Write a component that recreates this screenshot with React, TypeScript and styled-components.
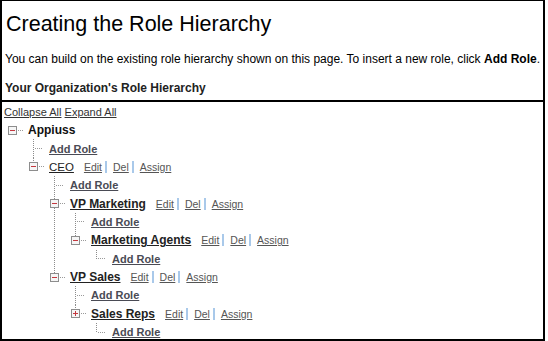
import React from 'react'
import styled, { createGlobalStyle } from 'styled-components'

const GlobalStyle = createGlobalStyle`
  body {
    margin: 0;
    background: #fff;
    font-family: 'Liberation Sans', Arial, sans-serif;
  }
`

const ROW = 18.36
const INDENT = 21

const Frame = styled.div`
  box-sizing: border-box;
  width: 545px;
  height: 341px;
  border-style: solid;
  border-color: #000;
  border-width: 1px 2px 2px 2px;
  overflow: hidden;
  color: #000;
`

const Header = styled.div`
  padding: 10px 0 5px 3px;
  border-bottom: 2px solid #000;
`

const Title = styled.h1`
  margin: 0;
  padding-left: 1px;
  font-size: 21.5px;
  line-height: 26px;
  font-weight: normal;
  white-space: nowrap;
`

const Intro = styled.p`
  margin: 15px 0 0 0;
  font-size: 12px;
  line-height: 14px;
  white-space: nowrap;
`

const SubHeading = styled.h2`
  margin: 15px 0 0 0;
  font-size: 12px;
  line-height: 14px;
  font-weight: bold;
  color: #222;
`

const Body = styled.div`
  padding: 4px 0 0 2px;
`

const ToolLinks = styled.div`
  font-size: 11px;
  line-height: 13px;
  color: #333;
  white-space: nowrap;
`

const ToolLink = styled.a`
  color: #333;
  text-decoration: underline;
  cursor: pointer;
`

const TreeList = styled.ul<{ nested?: boolean }>`
  list-style: none;
  margin: ${(p) => (p.nested ? `0 0 0 ${INDENT}px` : '2px 0 0 4px')};
  padding: 0;
`

const Item = styled.li<{ connected?: boolean }>`
  position: relative;
  ${(p) =>
    p.connected &&
    `
    &::before {
      content: '';
      position: absolute;
      left: 4px;
      top: 0;
      bottom: 0;
      width: 1px;
      background: repeating-linear-gradient(to bottom, #8c8c8c 0 1px, transparent 1px 2px);
    }
    &:last-child::before {
      bottom: auto;
      height: ${ROW / 2}px;
    }
  `}
`

const Row = styled.div`
  display: flex;
  align-items: center;
  height: ${ROW}px;
  white-space: nowrap;
`

const Lead = styled.svg`
  position: relative;
  flex: 0 0 20px;
  width: 20px;
  height: 9px;
  display: block;
`

const NodeName = styled.a<{ plain?: boolean; root?: boolean }>`
  font-size: ${(p) => (p.plain ? 11.5 : 12)}px;
  font-weight: ${(p) => (p.plain ? 'normal' : 'bold')};
  color: ${(p) => (p.root ? '#111' : '#222')};
  text-decoration: ${(p) => (p.root ? 'none' : 'underline')};
  cursor: pointer;
`

const AddRole = styled.a`
  font-size: 11px;
  font-weight: bold;
  color: #4a4b55;
  text-decoration: underline;
  cursor: pointer;
`

const Actions = styled.span`
  display: inline-flex;
  align-items: center;
  margin-left: 10px;
`

const Action = styled.a<{ last?: boolean }>`
  font-size: 10.5px;
  line-height: 12px;
  color: #555;
  text-decoration: underline;
  cursor: pointer;
  ${(p) =>
    !p.last &&
    `
    padding-right: 3px;
    margin-right: 6px;
    border-right: 2px solid #a9c9ea;
  `}
`

type RoleNode = {
  name?: string
  plain?: boolean
  collapsed?: boolean
  children?: RoleNode[]
}

const hierarchy: RoleNode = {
  name: 'Appiuss',
  children: [
    {},
    {
      name: 'CEO',
      plain: true,
      children: [
        {},
        {
          name: 'VP Marketing',
          children: [{}, { name: 'Marketing Agents', children: [{}] }],
        },
        {
          name: 'VP Sales',
          children: [{}, { name: 'Sales Reps', collapsed: true, children: [{}] }],
        },
      ],
    },
  ],
}

const ToggleIcon = ({ collapsed }: { collapsed?: boolean }) => (
  <Lead viewBox="0 0 20 9">
    <rect x="0.5" y="0.5" width="8" height="8" fill="#f6f6f6" stroke="#8d8d8d" />
    <line x1="2" y1="4.5" x2="7" y2="4.5" stroke="#c4383f" />
    {collapsed && <line x1="4.5" y1="2" x2="4.5" y2="7" stroke="#c4383f" />}
    <line x1="10" y1="4.5" x2="15" y2="4.5" stroke="#9a9a9a" strokeDasharray="1 1" />
  </Lead>
)

const LeafLine = () => (
  <Lead viewBox="0 0 20 9">
    <line x1="6" y1="4.5" x2="14" y2="4.5" stroke="#9a9a9a" strokeDasharray="1 1" />
  </Lead>
)

const TreeNode = ({ node, depth }: { node: RoleNode; depth: number }) => {
  if (!node.name) {
    return (
      <Item connected>
        <Row>
          <LeafLine />
          <AddRole>Add Role</AddRole>
        </Row>
      </Item>
    )
  }
  const isRoot = depth === 0
  return (
    <Item connected={!isRoot}>
      <Row>
        <ToggleIcon collapsed={node.collapsed} />
        <NodeName plain={node.plain} root={isRoot}>
          {node.name}
        </NodeName>
        {!isRoot && (
          <Actions>
            <Action>Edit</Action>
            <Action>Del</Action>
            <Action last>Assign</Action>
          </Actions>
        )}
      </Row>
      {node.children && (
        <TreeList nested>
          {node.children.map((child, i) => (
            <TreeNode key={i} node={child} depth={depth + 1} />
          ))}
        </TreeList>
      )}
    </Item>
  )
}

const App = () => {
  return (
    <>
      <GlobalStyle />
      <Frame>
        <Header>
          <Title>Creating the Role Hierarchy</Title>
          <Intro>
            You can build on the existing role hierarchy shown on this page. To insert a new role, click{' '}
            <b>Add Role</b>.
          </Intro>
          <SubHeading>Your Organization's Role Hierarchy</SubHeading>
        </Header>
        <Body>
          <ToolLinks>
            <ToolLink>Collapse All</ToolLink> <ToolLink>Expand All</ToolLink>
          </ToolLinks>
          <TreeList>
            <TreeNode node={hierarchy} depth={0} />
          </TreeList>
        </Body>
      </Frame>
    </>
  )
}

export default App
